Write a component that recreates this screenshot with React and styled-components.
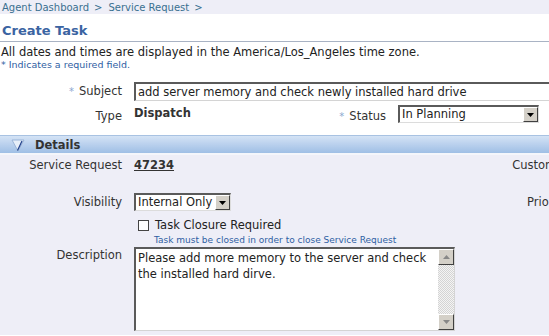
import React from "react";
import styled, { createGlobalStyle } from "styled-components";

const Global = createGlobalStyle`
  html, body { margin: 0; padding: 0; background: #fff; overflow: hidden; }
  body { font-family: "DejaVu Sans", Tahoma, sans-serif; font-size: 11.5px; line-height: 14px; color: #333; }
  #root { width: 549px; height: 336px; overflow: hidden; }
`;

const Page = styled.div`
  width: 760px;
`;

const Crumbs = styled.div`
  height: 14px;
  background: #eeeef7;
  color: #3a7090;
  font-size: 10px;
  line-height: 13px;
  padding-left: 2px;
  display: flex;
  align-items: center;
`;

const Sep = styled.span`
  margin: 0 6px 0 5px;
`;

const Title = styled.h1`
  margin: 9px 0 0 0;
  padding: 0 0 3px 2px;
  font-size: 13px;
  font-weight: bold;
  color: #3b64a2;
  line-height: 15px;
  border-bottom: 1px solid #a9b3c4;
`;

const Info = styled.div`
  margin-top: 4px;
  padding-left: 1px;
  font-size: 11.5px;
  line-height: 13px;
  color: #222;
`;

const Req = styled.div`
  font-size: 9.5px;
  line-height: 11px;
  color: #2f5ea3;
  padding-left: 1px;
`;

const FormRow = styled.div`
  display: grid;
  grid-template-columns: 122px auto;
  justify-content: start;
  column-gap: 12px;
  align-items: center;
  margin-top: 12px;
`;

const Label = styled.div`
  text-align: right;
  color: #333;
  white-space: nowrap;
  padding-top: ${(p) => p.$pt || 0}px;
`;

const Star = styled.span`
  color: #8aa8d0;
  margin-right: 5px;
  font-size: 10px;
`;

const TextInput = styled.div`
  width: 430px;
  height: 16px;
  border-top: 2px solid #5a5a5a;
  border-left: 2px solid #5a5a5a;
  border-bottom: 1px solid #d4d4d4;
  border-right: 1px solid #d4d4d4;
  background: #fff;
  padding-left: 2px;
  line-height: 16px;
  color: #222;
  white-space: nowrap;
`;

const Bold = styled.span`
  font-weight: bold;
  color: #333;
`;

const Link = styled.span`
  font-weight: bold;
  color: #333;
  text-decoration: underline;
`;

const SelectBox = styled.div`
  display: flex;
  align-items: stretch;
  width: ${(p) => p.$w}px;
  height: 15px;
  border-top: 2px solid #5a5a5a;
  border-left: 2px solid #5a5a5a;
  border-bottom: 1px solid #dcdcdc;
  border-right: 1px solid #dcdcdc;
  background: #fff;
`;

const SelectText = styled.div`
  flex: 1;
  padding-left: 2px;
  line-height: 15px;
  color: #222;
  white-space: nowrap;
  overflow: hidden;
`;

const ArrowBtn = styled.div`
  width: 13px;
  background: #d4d0c8;
  border-top: 1px solid #fff;
  border-left: 1px solid #fff;
  border-right: 1px solid #404040;
  border-bottom: 1px solid #404040;
  display: flex;
  align-items: center;
  justify-content: center;
`;

const Tri = ({ up, color = "#000" }) => (
  <svg width="7" height="4" viewBox="0 0 7 4">
    {up ? <path d="M3.5 0 L7 4 L0 4 Z" fill={color} /> : <path d="M0 0 L7 0 L3.5 4 Z" fill={color} />}
  </svg>
);

const Select = ({ w, children }) => (
  <SelectBox $w={w}>
    <SelectText>{children}</SelectText>
    <ArrowBtn>
      <Tri />
    </ArrowBtn>
  </SelectBox>
);

const TypeRow = styled.div`
  display: grid;
  grid-template-columns: 122px 184px 56px auto;
  justify-content: start;
  column-gap: 12px;
  margin-top: 4px;
  align-items: start;
`;

const StatusLabel = styled.div`
  text-align: right;
  padding-top: 4px;
  white-space: nowrap;
`;

const DispatchCell = styled.div`
  padding-top: 1px;
`;

const Section = styled.div`
  margin-top: 11px;
  background: #eeeef7;
  height: 200px;
`;

const SectionHead = styled.div`
  height: 17px;
  border-top: 1px solid #a8c2e2;
  border-bottom: 2px solid #f4f6fb;
  background: linear-gradient(#d4e3f5 0%, #bcd2ee 45%, #9fbfe5 100%);
  display: flex;
  align-items: center;
  padding-left: 11px;
  gap: 10px;
  font-weight: bold;
  color: #333;
`;

const SectionBody = styled.div`
  padding-top: 3px;
`;

const DetailGrid = styled.div`
  display: grid;
  grid-template-columns: 122px 310px 112px;
  justify-content: start;
  column-gap: 12px;
`;

const RightLabel = styled.div`
  color: #333;
  text-align: right;
  white-space: nowrap;
  padding-top: ${(p) => p.$pt || 0}px;
`;

const SelectWrap = styled.div`
  padding-top: 21px;
`;

const CheckLine = styled.div`
  display: flex;
  align-items: center;
  gap: 6px;
  margin-left: 4px;
  margin-top: 7px;
  color: #222;
`;

const Box = styled.span`
  width: 9px;
  height: 9px;
  border: 1px solid #444;
  background: #fff;
  display: inline-block;
`;

const Help = styled.div`
  margin-left: 20px;
  margin-top: 3px;
  font-size: 9px;
  line-height: 11px;
  color: #2f5ea3;
  white-space: nowrap;
`;

const TextArea = styled.div`
  width: 318px;
  height: 81px;
  border-top: 2px solid #5a5a5a;
  border-left: 2px solid #5a5a5a;
  border-bottom: 1px solid #d4d4d4;
  border-right: 1px solid #d4d4d4;
  background: #fff;
  display: flex;
  margin-top: 1px;
`;

const TAText = styled.div`
  flex: 1;
  padding: 1px 2px;
  line-height: 16px;
  color: #222;
`;

const ScrollBar = styled.div`
  width: 16px;
  display: flex;
  flex-direction: column;
  justify-content: space-between;
  background-color: #e8e8e8;
  background-image: repeating-conic-gradient(#d4d4d4 0 25%, #f4f4f4 0 50%);
  background-size: 2px 2px;
`;

const ScrollBtn = styled.div`
  height: 14px;
  background: #d4d0c8;
  border-top: 1px solid #fff;
  border-left: 1px solid #fff;
  border-right: 1px solid #404040;
  border-bottom: 1px solid #404040;
  display: flex;
  align-items: center;
  justify-content: center;
`;

const DetailsIcon = () => (
  <svg width="14" height="14" viewBox="0 0 14 14">
    <path d="M1 2 L13 2 L7 13 Z" fill="#e6eef8" stroke="#9ab4d8" strokeWidth="1" />
    <path d="M11 3 L6.5 12.5" stroke="#1f3f8a" strokeWidth="1.2" />
  </svg>
);

export default function App() {
  return (
    <Page>
      <Global />
      <Crumbs>
        Agent Dashboard<Sep>&gt;</Sep>Service Request<Sep>&gt;</Sep>
      </Crumbs>
      <Title>Create Task</Title>
      <Info>All dates and times are displayed in the America/Los_Angeles time zone.</Info>
      <Req>* Indicates a required field.</Req>

      <FormRow>
        <Label>
          <Star>*</Star>Subject
        </Label>
        <TextInput>add server memory and check newly installed hard drive</TextInput>
      </FormRow>

      <TypeRow>
        <Label $pt={4}>Type</Label>
        <DispatchCell>
          <Bold>Dispatch</Bold>
        </DispatchCell>
        <StatusLabel>
          <Star>*</Star>Status
        </StatusLabel>
        <Select w={138}>In Planning</Select>
      </TypeRow>

      <Section>
        <SectionHead>
          <DetailsIcon />
          Details
        </SectionHead>
        <SectionBody>
          <DetailGrid>
            <Label>Service Request</Label>
            <div>
              <Link>47234</Link>
            </div>
            <RightLabel>Customer</RightLabel>

            <Label $pt={23}>Visibility</Label>
            <SelectWrap>
              <Select w={94}>Internal Only</Select>
              <CheckLine>
                <Box />
                Task Closure Required
              </CheckLine>
              <Help>Task must be closed in order to close Service Request</Help>
            </SelectWrap>
            <RightLabel $pt={23}>Priority</RightLabel>

            <Label $pt={2}>Description</Label>
            <div>
              <TextArea>
                <TAText>Please add more memory to the server and check the installed hard dirve.</TAText>
                <ScrollBar>
                  <ScrollBtn>
                    <Tri up color="#888" />
                  </ScrollBtn>
                  <ScrollBtn>
                    <Tri color="#888" />
                  </ScrollBtn>
                </ScrollBar>
              </TextArea>
            </div>
            <div />
          </DetailGrid>
        </SectionBody>
      </Section>
    </Page>
  );
}
